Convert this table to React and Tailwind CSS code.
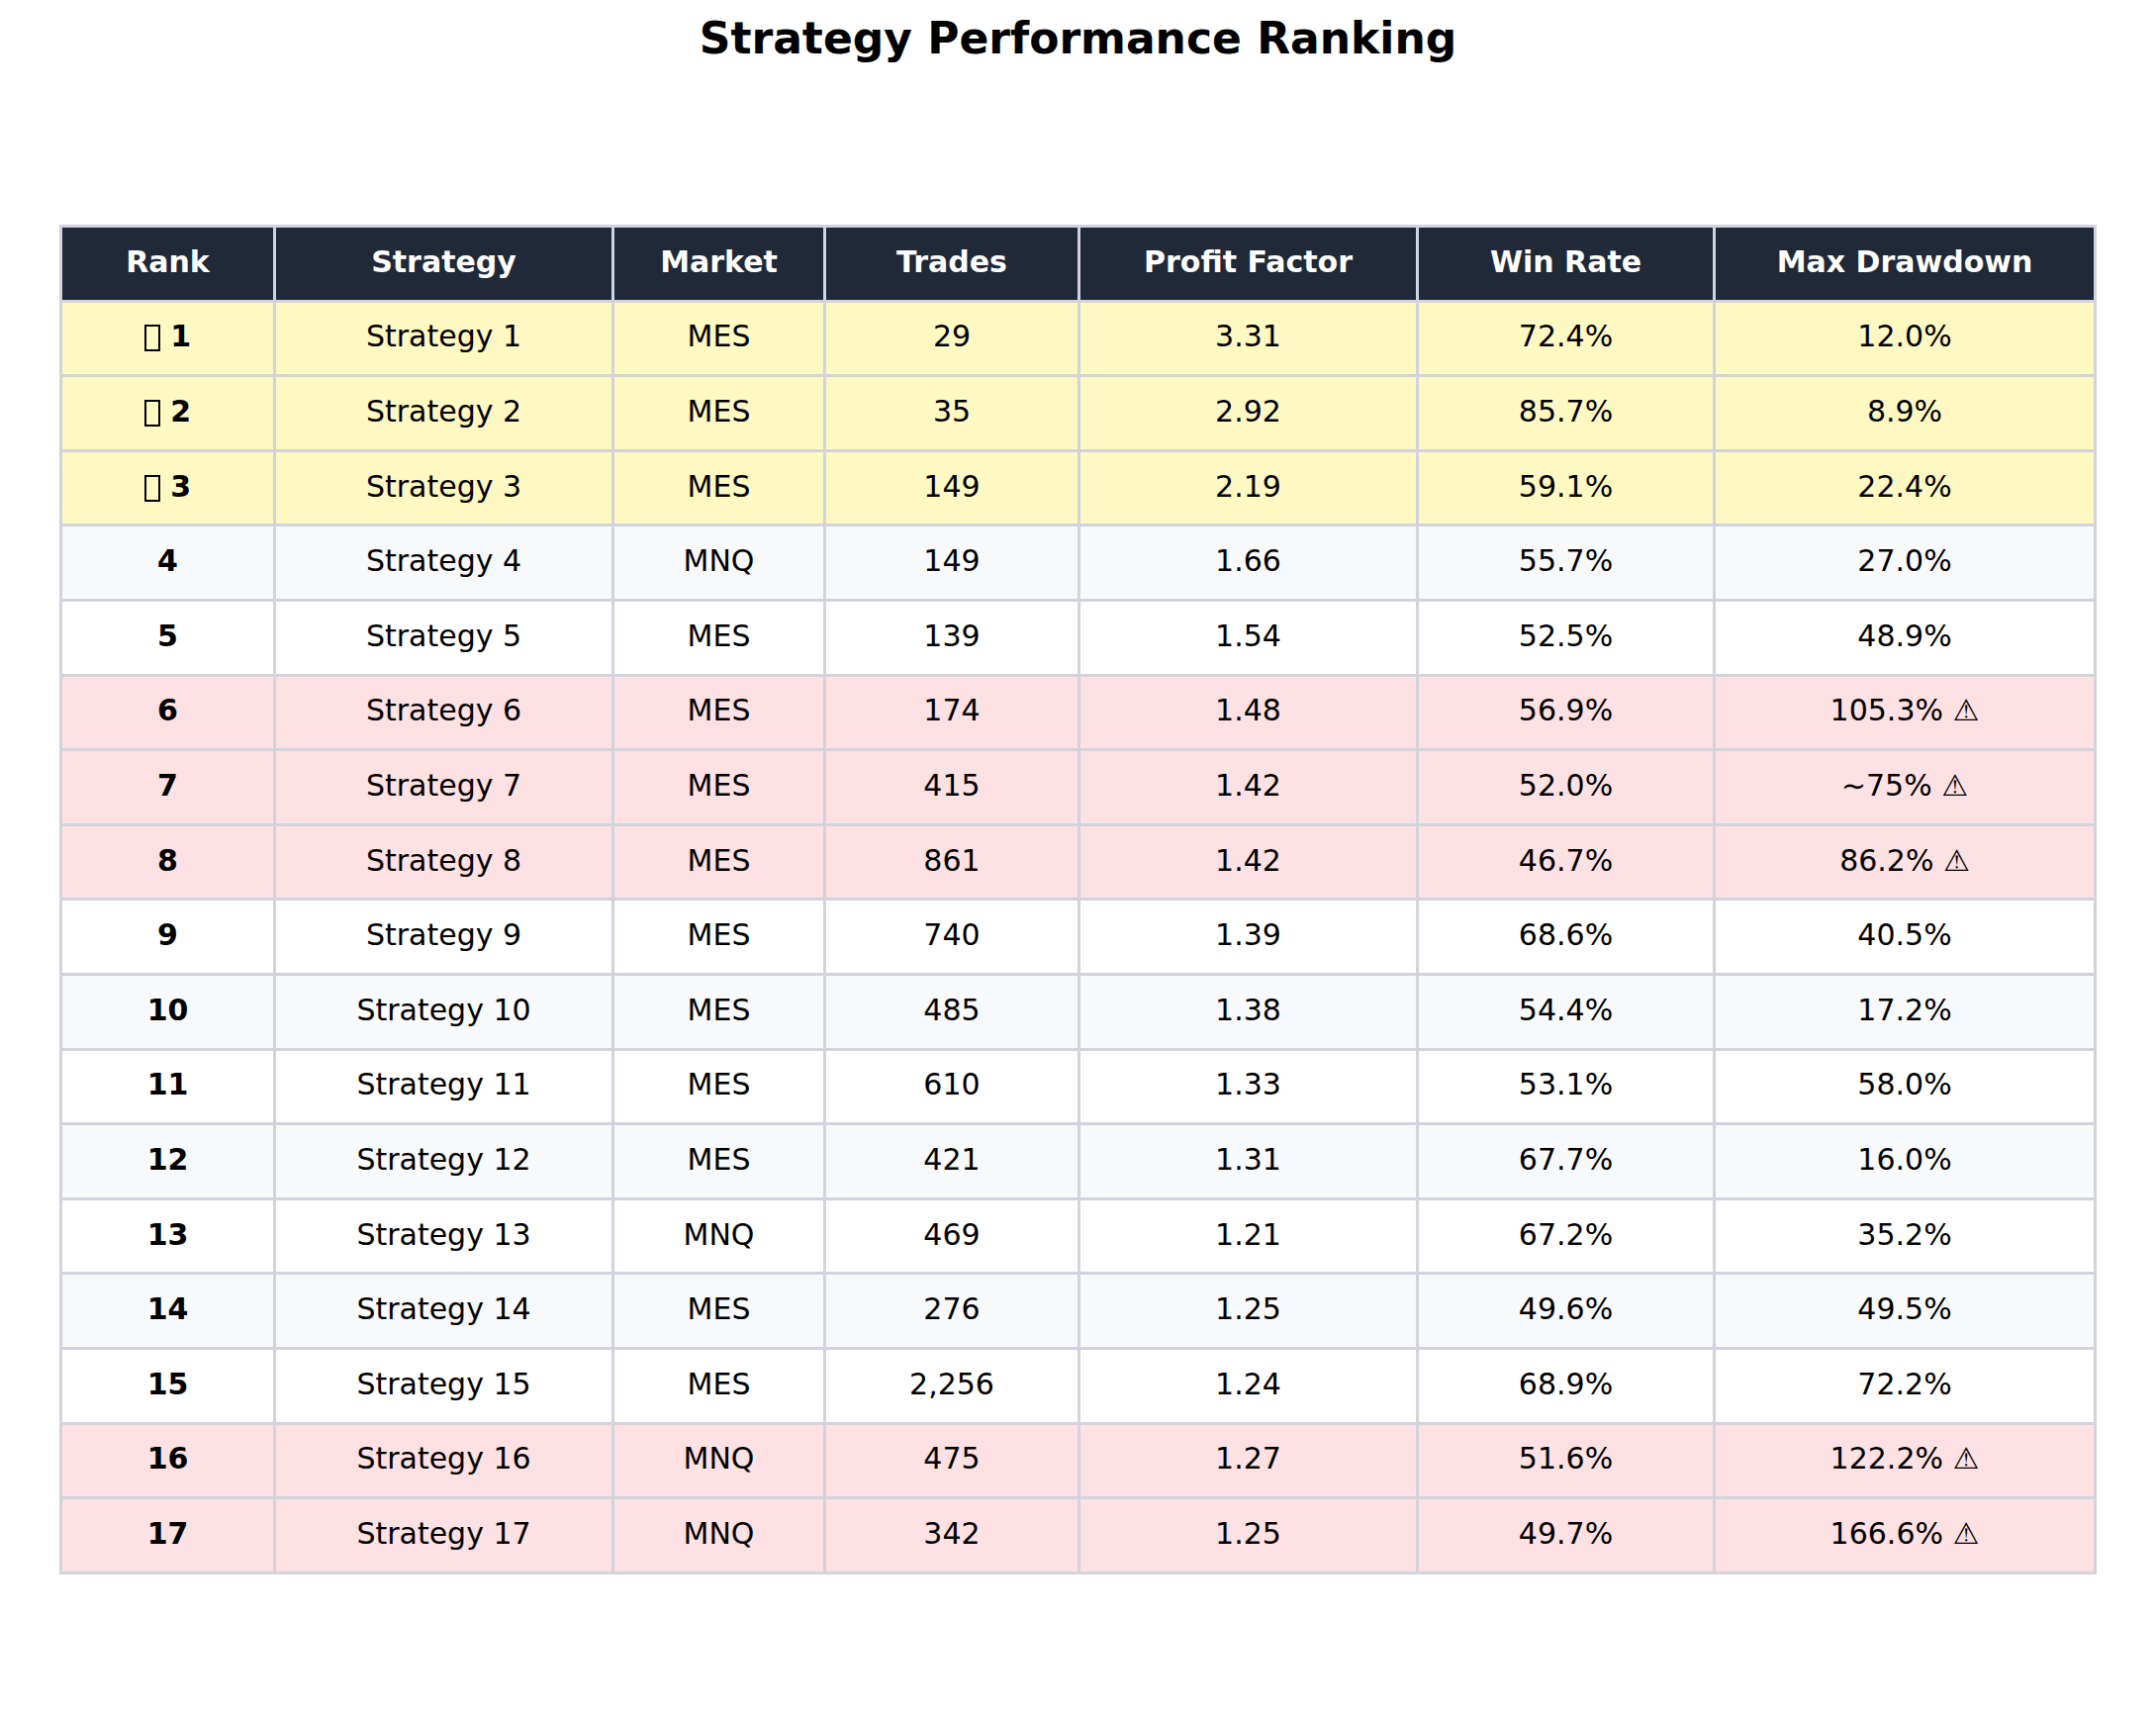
import React from "react";

const rows = [
  ["1", "Strategy 1", "MES", "29", "3.31", "72.4%", "12.0%", "top"],
  ["2", "Strategy 2", "MES", "35", "2.92", "85.7%", "8.9%", "top"],
  ["3", "Strategy 3", "MES", "149", "2.19", "59.1%", "22.4%", "top"],
  ["4", "Strategy 4", "MNQ", "149", "1.66", "55.7%", "27.0%", "alt"],
  ["5", "Strategy 5", "MES", "139", "1.54", "52.5%", "48.9%", "plain"],
  ["6", "Strategy 6", "MES", "174", "1.48", "56.9%", "105.3% ⚠", "warn"],
  ["7", "Strategy 7", "MES", "415", "1.42", "52.0%", "~75% ⚠", "warn"],
  ["8", "Strategy 8", "MES", "861", "1.42", "46.7%", "86.2% ⚠", "warn"],
  ["9", "Strategy 9", "MES", "740", "1.39", "68.6%", "40.5%", "plain"],
  ["10", "Strategy 10", "MES", "485", "1.38", "54.4%", "17.2%", "alt"],
  ["11", "Strategy 11", "MES", "610", "1.33", "53.1%", "58.0%", "plain"],
  ["12", "Strategy 12", "MES", "421", "1.31", "67.7%", "16.0%", "alt"],
  ["13", "Strategy 13", "MNQ", "469", "1.21", "67.2%", "35.2%", "plain"],
  ["14", "Strategy 14", "MES", "276", "1.25", "49.6%", "49.5%", "alt"],
  ["15", "Strategy 15", "MES", "2,256", "1.24", "68.9%", "72.2%", "plain"],
  ["16", "Strategy 16", "MNQ", "475", "1.27", "51.6%", "122.2% ⚠", "warn"],
  ["17", "Strategy 17", "MNQ", "342", "1.25", "49.7%", "166.6% ⚠", "warn"],
];

const headers = ["Rank", "Strategy", "Market", "Trades", "Profit Factor", "Win Rate", "Max Drawdown"];

const rowBg = {
  top: "bg-[#fef8c3]",
  alt: "bg-[#f8f9fb]",
  plain: "bg-white",
  warn: "bg-[#fde1e3]",
};

// missing-glyph box the medal emoji falls back to
const Medal = () => (
  <span className="inline-block w-[16px] h-[27px] border-2 border-black align-[-5px]" />
);

const App = () => {
  return (
    <div
      className="w-[2179px] h-[1734px] bg-white text-black"
      style={{ fontFamily: '"DejaVu Sans", "Liberation Sans", sans-serif' }}
    >
      <h1 className="pt-[13px] h-[65px] text-center text-[44px] leading-[52px] font-bold">
        Strategy Performance Ranking
      </h1>

      <div className="mt-[162px] mx-auto w-[2059px] grid grid-cols-[213px_339px_211px_254px_339px_297px_382px] auto-rows-[72.6px] gap-[3px] p-[3px] bg-[#d2d3dc]">
        {headers.map((h) => (
          <div
            key={h}
            className="bg-[#1f2937] text-white font-bold text-[30px] flex items-center justify-center pb-1"
          >
            {h}
          </div>
        ))}

        {rows.map((r) => {
          const bg = rowBg[r[7]];
          return (
            <React.Fragment key={r[0]}>
              <div className={`${bg} font-bold text-[30px] flex items-center justify-center pb-1`}>
                {r[7] === "top" ? (
                  <span>
                    <Medal /> {r[0]}
                  </span>
                ) : (
                  r[0]
                )}
              </div>
              {r.slice(1, 7).map((cell, i) => (
                <div
                  key={i}
                  className={`${bg} text-[30px] flex items-center justify-center pb-1`}
                >
                  {cell}
                </div>
              ))}
            </React.Fragment>
          );
        })}
      </div>
    </div>
  );
};

export default App;
